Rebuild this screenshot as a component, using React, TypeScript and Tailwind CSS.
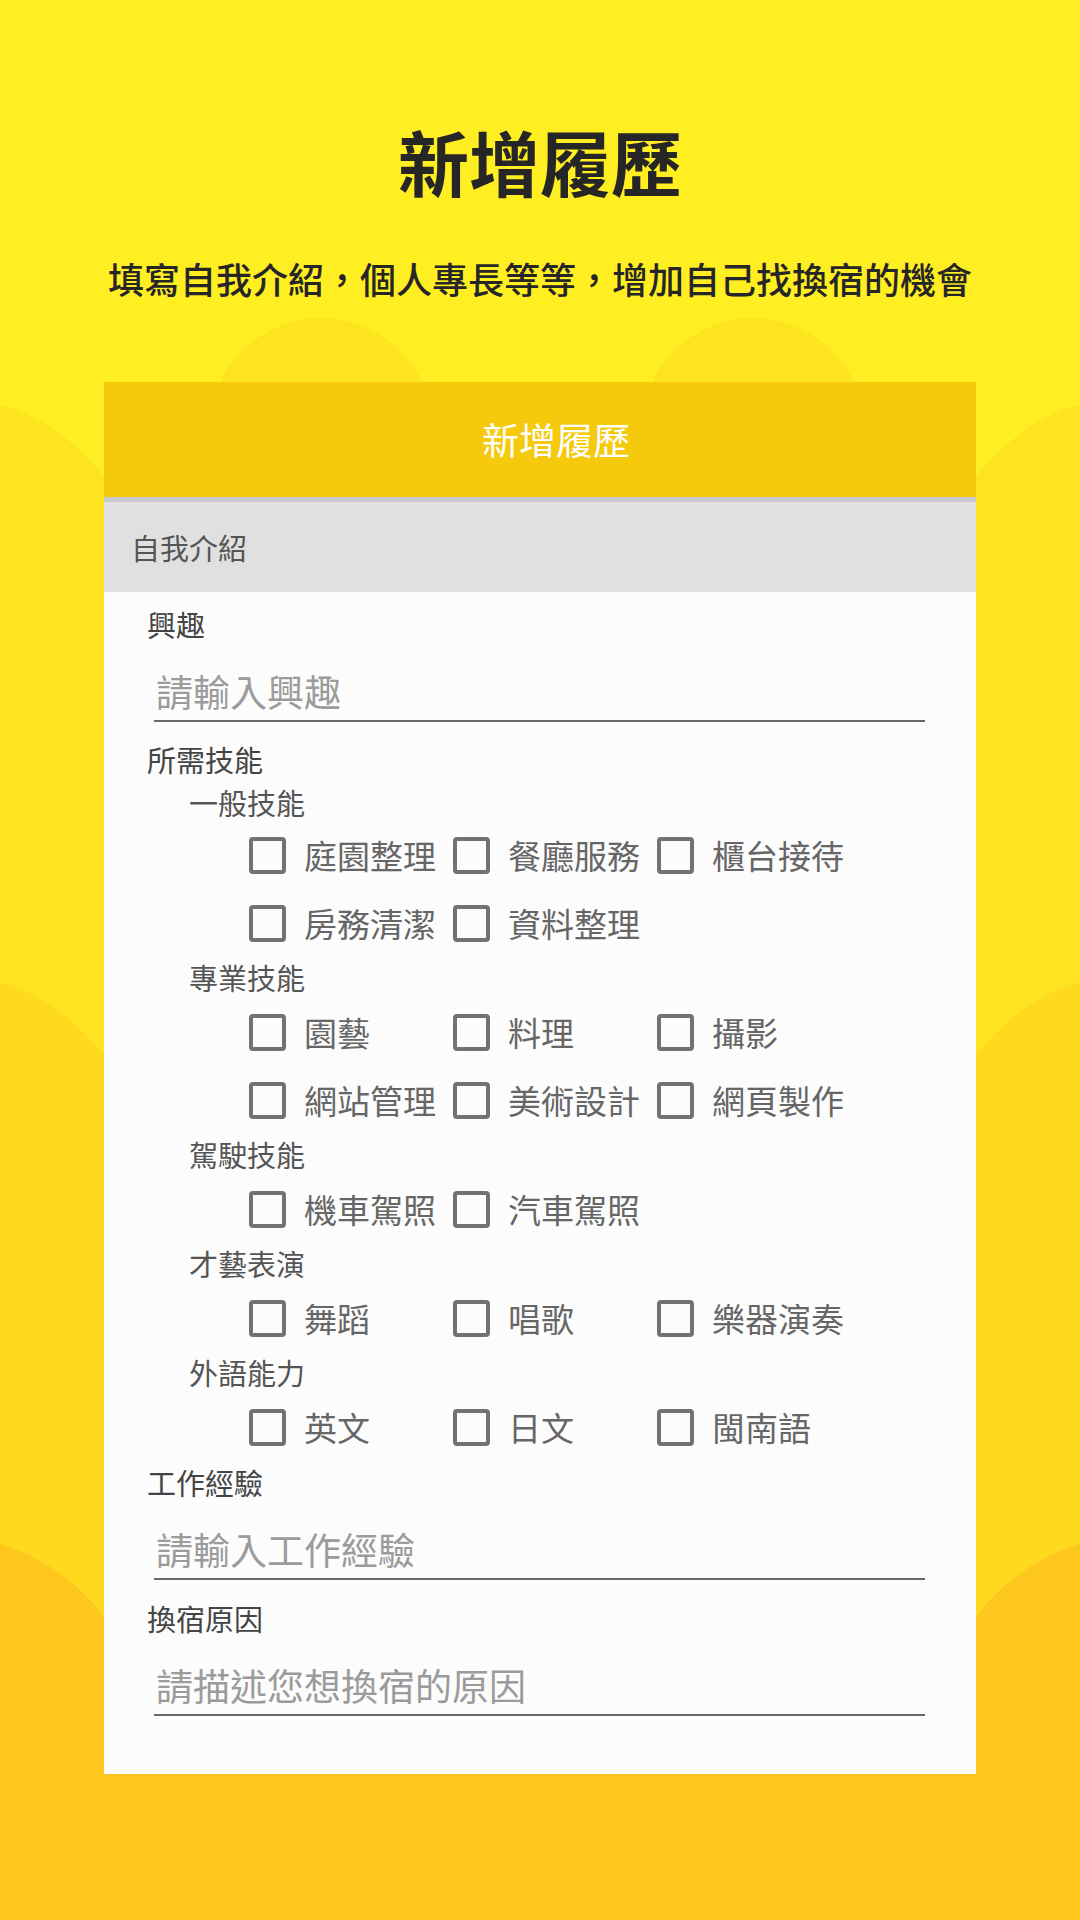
const font = { fontFamily: '"Noto Sans CJK TC", "Noto Sans", sans-serif' };

type Group = { title: string; rows: string[][] };

const groups: Group[] = [
  { title: '一般技能', rows: [['庭園整理', '餐廳服務', '櫃台接待'], ['房務清潔', '資料整理']] },
  { title: '專業技能', rows: [['園藝', '料理', '攝影'], ['網站管理', '美術設計', '網頁製作']] },
  { title: '駕駛技能', rows: [['機車駕照', '汽車駕照']] },
  { title: '才藝表演', rows: [['舞蹈', '唱歌', '樂器演奏']] },
  { title: '外語能力', rows: [['英文', '日文', '閩南語']] },
];

function Background() {
  return (
    <svg className="absolute inset-0" width="1080" height="1920" viewBox="0 0 1080 1920">
      <rect width="1080" height="1920" fill="#FFEE22" />
      <g fill="#FEE420">
        <circle cx="321" cy="430" r="112" />
        <circle cx="753" cy="430" r="112" />
        <circle cx="-60" cy="600" r="205" />
        <circle cx="1140" cy="600" r="205" />
        <rect x="0" y="500" width="1080" height="1420" />
      </g>
      <g fill="#FED91E">
        <circle cx="-60" cy="1178" r="205" />
        <circle cx="1140" cy="1178" r="205" />
        <rect x="0" y="1100" width="1080" height="820" />
      </g>
      <g fill="#FEC71E">
        <circle cx="-60" cy="1740" r="205" />
        <circle cx="1140" cy="1740" r="205" />
        <rect x="0" y="1680" width="1080" height="240" />
      </g>
    </svg>
  );
}

function Field({ label, placeholder, top }: { label: string; placeholder: string; top: string }) {
  return (
    <div className={top}>
      <div className="text-[29px] leading-[30px] text-[#444]">{label}</div>
      <div className="mt-[34px] ml-[7px] mr-[51px] border-b-2 border-[#676767] pb-[10px] pl-[2px]">
        <div className="text-[37px] leading-[37px] text-[#9b9b9b]">{placeholder}</div>
      </div>
    </div>
  );
}

function Check({ label }: { label: string }) {
  return (
    <div className="flex items-center gap-[18px]">
      <div className="w-[37px] h-[37px] border-[4px] border-[#727272] rounded-[4px]" />
      <span className="text-[33px] leading-none text-[#666]">{label}</span>
    </div>
  );
}

export default function App() {
  return (
    <div className="relative w-[1080px] h-[1920px] overflow-hidden" style={font}>
      <Background />
      <div className="relative flex flex-col items-center">
        <h1 className="mt-[125px] text-[71px] leading-[70px] font-bold text-[#262626]">新增履歷</h1>
        <p className="mt-[65px] text-[36px] leading-[36px] font-medium text-[#262626]">
          填寫自我介紹，個人專長等等，增加自己找換宿的機會
        </p>
        <div className="mt-[86px] w-[872px] bg-[#FCFCFC]">
          <div className="h-[115px] bg-[#F5C90C] flex items-center justify-center pl-[32px]">
            <span className="text-[37px] leading-none text-white">新增履歷</span>
          </div>
          <div className="h-[5px] bg-[#C8CACD]" />
          <div className="h-[90px] bg-[#E0E0E0] flex items-center pl-[27px]">
            <span className="text-[29px] leading-none text-[#555]">自我介紹</span>
          </div>
          <div className="pl-[43px] pb-[58px]">
            <Field top="pt-[17px]" label="興趣" placeholder="請輸入興趣" />
            <div className="mt-[22px] text-[29px] leading-[30px] text-[#444]">所需技能</div>
            <div className="mt-[13px]">
              {groups.map((g, i) => (
                <div key={g.title} className={i === 0 ? '' : 'mt-[5px]'}>
                  <div className="ml-[42px] text-[29px] leading-[30px] text-[#555]">{g.title}</div>
                  <div className={`${i === 0 ? 'mt-[4px]' : 'mt-[6px]'} ml-[102px]`}>
                    {g.rows.map((row, r) => (
                      <div key={r} className="h-[68px] grid grid-cols-[204px_204px_204px] items-center">
                        {row.map((c) => (
                          <Check key={c} label={c} />
                        ))}
                      </div>
                    ))}
                  </div>
                </div>
              ))}
            </div>
            <Field top="mt-[6px]" label="工作經驗" placeholder="請輸入工作經驗" />
            <Field top="mt-[23px]" label="換宿原因" placeholder="請描述您想換宿的原因" />
          </div>
        </div>
      </div>
    </div>
  );
}
